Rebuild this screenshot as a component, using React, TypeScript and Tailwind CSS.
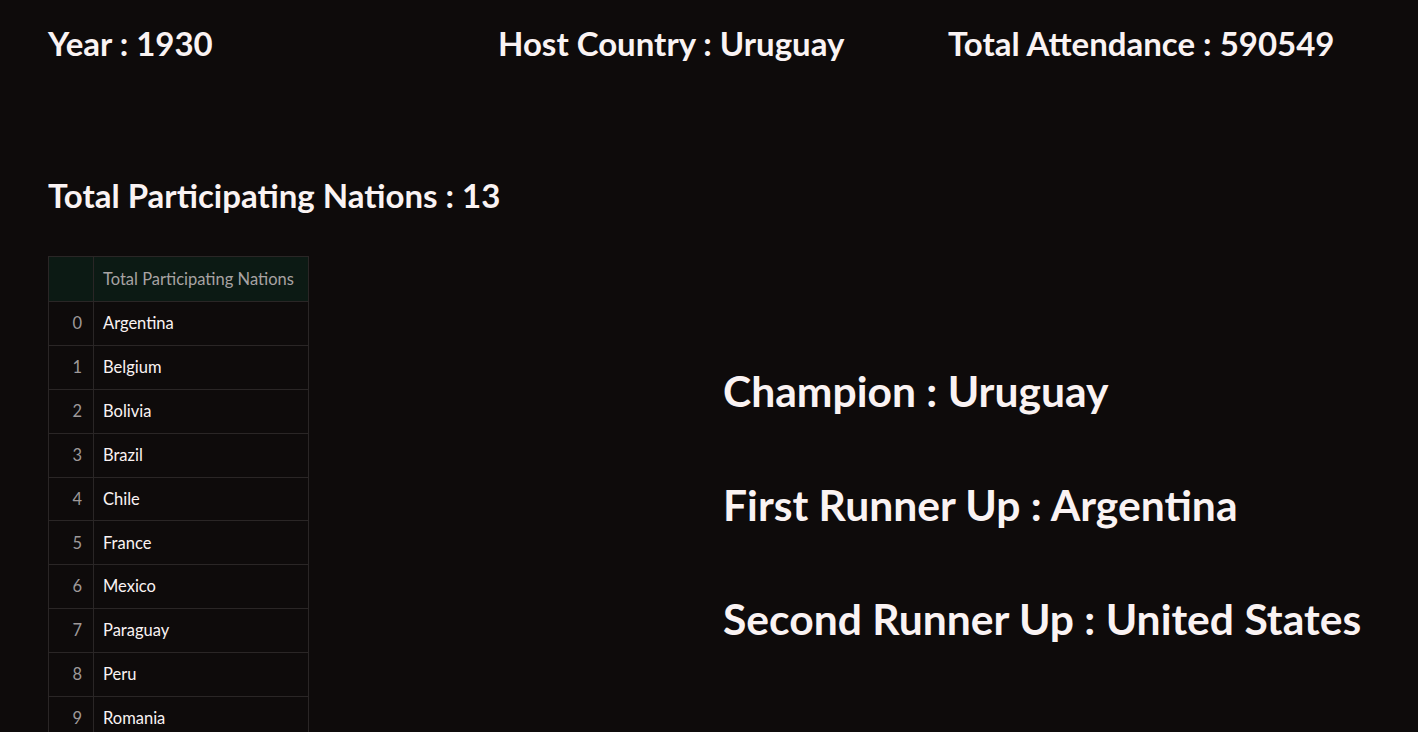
import React from "react";

const nations = [
  "Argentina",
  "Belgium",
  "Bolivia",
  "Brazil",
  "Chile",
  "France",
  "Mexico",
  "Paraguay",
  "Peru",
  "Romania",
  "United States",
  "Uruguay",
  "Yugoslavia",
];

export default function App() {
  return (
    <div
      className="w-full overflow-hidden bg-[#0e0b0b] text-[#faf3f3] px-12"
      style={{ fontFamily: '"Lato", "Open Sans", sans-serif', height: 732 }}
    >
      <div className="grid grid-cols-3 gap-[28px] pt-[23px]">
        <div className="text-[33px] font-bold leading-[40px]">Year : 1930</div>
        <div className="text-[33px] font-bold leading-[40px]">Host Country : Uruguay</div>
        <div className="text-[33px] font-bold leading-[40px]">Total Attendance : 590549</div>
      </div>

      <div className="mt-[112px] text-[33px] font-bold leading-[40px]">
        Total Participating Nations : 13
      </div>

      <div className="mt-[41px] grid grid-cols-2 gap-[28px]">
        <div>
          <div className="w-[261px] border border-[#2a2626] text-[16.5px]">
            <div className="flex h-[45px] border-b border-[#2a2626] bg-[#0c1a14]">
              <div className="w-[45px] shrink-0 border-r border-[#2a2626]" />
              <div className="flex items-center pl-[9px] text-[#a8a3a3]">
                Total Participating Nations
              </div>
            </div>
            {nations.map((n, i) => (
              <div key={n} className="flex h-[43.9px] border-b border-[#2a2626]">
                <div className="flex w-[45px] shrink-0 items-center justify-end border-r border-[#2a2626] pr-[11px] text-[#9e9999]">
                  {i}
                </div>
                <div className="flex items-center pl-[9px]">{n}</div>
              </div>
            ))}
          </div>
        </div>
        <div className="flex flex-col gap-[58px] pt-[107px]">
          <div className="text-[42.6px] font-bold leading-[56px]">Champion : Uruguay</div>
          <div className="text-[42.6px] font-bold leading-[56px]">First Runner Up : Argentina</div>
          <div className="text-[42.6px] font-bold leading-[56px]">Second Runner Up : United States</div>
        </div>
      </div>
    </div>
  );
}
